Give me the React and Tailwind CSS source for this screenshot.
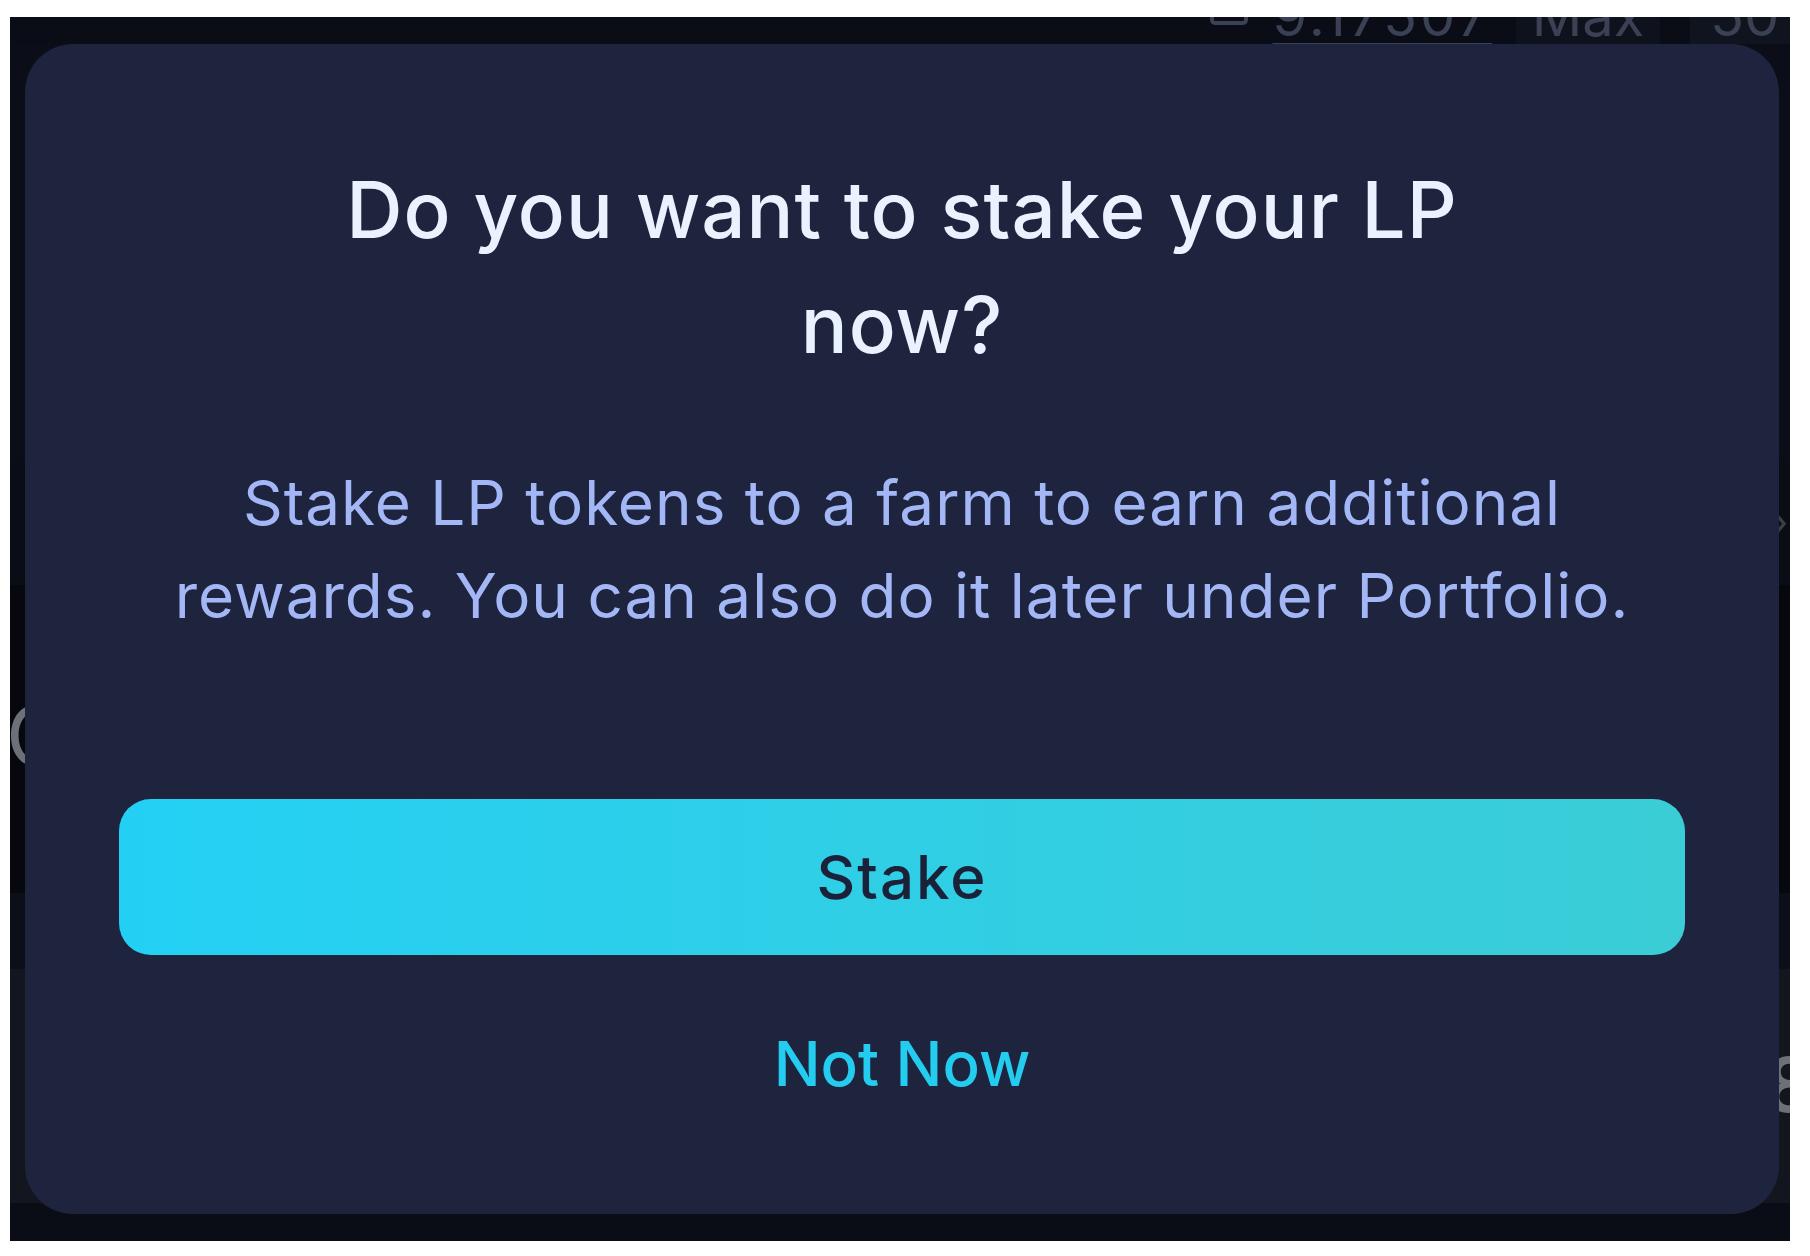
import React from 'react';

const FONT = { fontFamily: 'Inter, "Noto Sans", sans-serif' };

function BackdropRows() {
  return (
    <div className="flex h-full flex-col text-[#6b7079]">
      {/* top strip of the swap form peeking out above the dialog */}
      <div className="flex h-[27px] shrink-0 items-end justify-end overflow-hidden leading-none text-[#3b4154]">
        <div className="mr-[24px] flex items-end gap-[16px]">
          <svg width="48" height="40" viewBox="0 0 48 40" className="mb-[1px]" fill="none" stroke="#3b4154" strokeWidth="4">
            <rect x="3" y="-10" width="34" height="30" rx="3" />
            <path d="M20 8h14" />
          </svg>
          <span className="text-[56px] tracking-[3px] underline decoration-[2px] underline-offset-[7px]">9.17507</span>
        </div>
        <div className="flex h-full w-[144px] items-end justify-center bg-[#0e121c]">
          <span className="text-[56px]">Max</span>
        </div>
        <div className="ml-[30px] flex h-full w-[100px] items-end justify-start bg-[#10141e] pl-[20px]">
          <span className="text-[56px]">50%</span>
        </div>
      </div>
      <div className="h-[414px] shrink-0 bg-[#0b0e18]" />
      <div className="flex h-[127px] shrink-0 items-center justify-end bg-[#0a0d15] pr-[2px] text-[40px] text-[#3a3f4c]">›</div>
      <div className="flex h-[308px] shrink-0 items-start bg-[#06080d] pt-[109px]">
        <span className="-ml-[4px] text-[84px] leading-none">C</span>
      </div>
      <div className="h-[76px] shrink-0 bg-[#0c0f19]" />
      <div className="flex h-[234px] shrink-0 items-start justify-end bg-[#13161f] pt-[77px]">
        <span className="-mr-[24px] text-[76px] font-semibold leading-none">8</span>
      </div>
      <div className="flex-1 bg-[#0a0d16]" />
    </div>
  );
}

function StakePrompt() {
  return (
    <div
      className="absolute left-[15px] top-[27px] flex h-[1170px] w-[1754px] flex-col items-center rounded-[48px] bg-[#1e243d] px-[94px] pt-[108px]"
      style={FONT}
    >
      <h2 className="text-center text-[78px] font-medium leading-[115px] tracking-[1px] text-[#eaf2ff]">
        Do you want to stake your LP
        <br />
        now?
      </h2>
      <p className="mt-[74px] text-center text-[62px] leading-[93px] tracking-[1px] text-[#a3b6f6]">
        Stake LP tokens to a farm to earn additional
        <br />
        rewards. You can also do it later under Portfolio.
      </p>
      <button className="mt-[157px] flex h-[156px] w-full items-center justify-center rounded-[32px] bg-gradient-to-r from-[#23d0f4] to-[#3acdd6] text-[60px] font-medium tracking-[2px] text-[#1b2138]">
        Stake
      </button>
      <button className="mt-[62px] text-[62px] font-medium leading-[93px] text-[#24ccf0]">
        Not Now
      </button>
    </div>
  );
}

export default function App() {
  return (
    <div className="h-[1256px] w-[1810px] bg-white pl-[10px] pt-[17px]" style={FONT}>
      <div className="relative h-[1224px] w-[1780px] overflow-hidden bg-[#0a0d16]">
        <BackdropRows />
        <StakePrompt />
      </div>
    </div>
  );
}
